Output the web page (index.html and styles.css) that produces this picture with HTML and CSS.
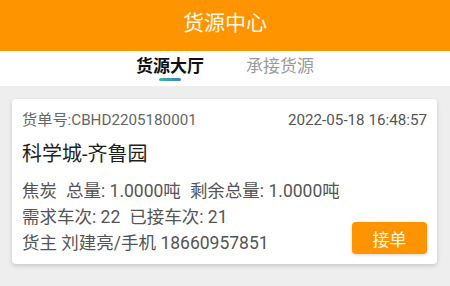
FILE: index.html
```html
<!DOCTYPE html>
<html lang="zh">
<head>
<meta charset="utf-8">
<link rel="stylesheet" href="styles.css">
</head>
<body>
<header class="topbar"><h1 class="title">货源中心</h1></header>
<nav class="tabs">
  <div class="tab active"><span class="tab-text">货源大厅</span><span class="tab-line"></span></div>
  <div class="tab"><span class="tab-text">承接货源</span></div>
</nav>
<main class="list">
  <section class="card">
    <div class="row-head">
      <span class="order-no">货单号:CBHD2205180001</span>
      <span class="date">2022-05-18 16:48:57</span>
    </div>
    <div class="route">科学城-齐鲁园</div>
    <div class="info"><span class="gap">焦炭</span><span class="gap">总量: 1.0000吨</span><span>剩余总量: 1.0000吨</span></div>
    <div class="bottom">
      <div class="info-col">
        <div class="info"><span class="gap">需求车次: 22</span><span>已接车次: 21</span></div>
        <div class="info">货主 刘建亮/手机 18660957851</div>
      </div>
      <button class="btn">接单</button>
    </div>
  </section>
</main>
</body>
</html>
```
FILE: styles.css
```css
* { box-sizing: border-box; }
html, body { margin: 0; padding: 0; }
body {
  width: 450px;
  height: 286px;
  overflow: hidden;
  background: #eeeeee;
  font-family: Roboto, "Noto Sans CJK SC", sans-serif;
}
.topbar {
  height: 51px;
  background: #fe9500;
  display: flex;
  justify-content: center;
}
.title {
  margin: 0;
  font-size: 21px;
  font-weight: 400;
  line-height: 46px;
  color: #fff8e8;
}
.tabs {
  height: 35px;
  background: #fff;
  display: flex;
  justify-content: center;
  gap: 42px;
  padding-top: 4px;
}
.tab {
  display: flex;
  flex-direction: column;
  align-items: center;
}
.tab-text {
  font-size: 17px;
  line-height: 22px;
  color: #9a9a9a;
}
.tab.active .tab-text {
  color: #111;
  font-weight: 700;
}
.tab-line {
  margin-top: 1px;
  width: 22px;
  height: 3px;
  border-radius: 2px;
  background: linear-gradient(90deg, #3dbb95, #3a7fce);
}
.list {
  padding: 13px 13px 0 12px;
}
.card {
  background: #fff;
  border-radius: 4px;
  box-shadow: 0 2px 4px rgba(0,0,0,0.16);
  padding: 11px 10px 8px 10px;
  display: flex;
  flex-direction: column;
}
.row-head {
  display: flex;
  justify-content: space-between;
  line-height: 20px;
  font-size: 15.2px;
}
.order-no { color: #666; }
.date { color: #555; }
.route {
  margin-top: 10px;
  font-size: 20px;
  line-height: 28px;
  color: #1e1e1e;
}
.info {
  font-size: 17.5px;
  line-height: 26px;
  color: #555;
}
.route + .info { margin-top: 10px; }
.gap { margin-right: 9px; }
.bottom {
  display: flex;
  justify-content: space-between;
}
.btn {
  align-self: flex-end;
  margin-bottom: 2px;
  width: 75px;
  height: 32px;
  border: none;
  border-radius: 4px;
  background: #fe9500;
  color: #fff8e8;
  font-family: inherit;
  font-size: 17px;
  box-shadow: 0 1px 3px rgba(0,0,0,0.18);
  padding: 0;
}
```
